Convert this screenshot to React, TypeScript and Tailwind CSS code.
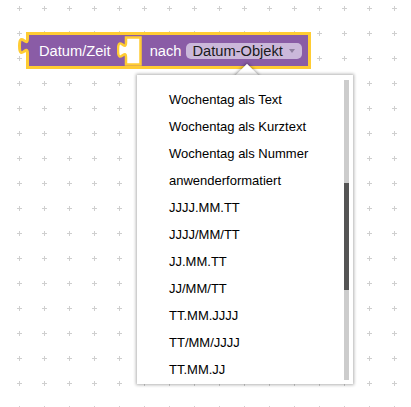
import React from "react";

const options = [
  "Wochentag als Text",
  "Wochentag als Kurztext",
  "Wochentag als Nummer",
  "anwenderformatiert",
  "JJJJ.MM.TT",
  "JJJJ/MM/TT",
  "JJ.MM.TT",
  "JJ/MM/TT",
  "TT.MM.JJJJ",
  "TT/MM/JJJJ",
  "TT.MM.JJ",
];

const GridBackground: React.FC = () => (
  <svg className="absolute inset-0 h-full w-full" aria-hidden="true">
    <defs>
      <pattern id="grid" width="25" height="25" patternUnits="userSpaceOnUse">
        <rect x="17" y="8" width="5" height="1" fill="#cfcfcf" />
        <rect x="19" y="6" width="1" height="5" fill="#cfcfcf" />
      </pattern>
    </defs>
    <rect width="100%" height="100%" fill="url(#grid)" />
  </svg>
);

const DateBlock: React.FC = () => (
  <div className="absolute left-[18px] top-[32px] h-[37px] w-[293px]">
    <svg className="absolute inset-0" width="293" height="37" aria-hidden="true">
      <path
        d="M9.5 1.5 v5 c0,10 -8,-8 -8,7.5 s8,-2.5 8,7.5 V35.5 H291.5 V1.5 Z"
        fill="#8a5ca6"
        stroke="#fc3"
        strokeWidth="3"
      />
    </svg>
    <div className="relative flex h-full items-center pl-[21px] text-[14.67px] text-white">
      <span>Datum/Zeit</span>
      <svg className="ml-[6px]" width="25" height="30" aria-hidden="true">
        <path
          d="M9 1.5 v5 c0,10 -8,-8 -8,7.5 s8,-2.5 8,7.5 V28.5 H23.5 V1.5 Z"
          fill="#fff"
          stroke="#fc3"
          strokeWidth="2.5"
        />
      </svg>
      <span className="ml-[8px]">nach</span>
      <div className="ml-[5px] flex h-[16px] w-[116px] items-center rounded-[5px] bg-[#cbb8da] pl-[6px] text-[#1a1a1a]">
        <span>Datum-Objekt</span>
        <svg className="ml-auto mr-[7px]" width="6" height="4" aria-hidden="true">
          <path d="M0 0 H6 L3 4 Z" fill="#8f7f9f" />
        </svg>
      </div>
    </div>
  </div>
);

const DropdownMenu: React.FC = () => (
  <div className="absolute left-[137px] top-[75px] h-[309px] w-[216px]">
    <div className="absolute left-[102px] top-[-8px] h-[16px] w-[16px] rotate-45 bg-white shadow-[0_0_3px_1px_rgba(0,0,0,0.3)]" />
    <div className="relative h-full w-full overflow-hidden bg-white shadow-[0_0_3px_1px_rgba(0,0,0,0.3)]">
      <div className="pt-[11px] text-[13px] text-black">
        {options.map((o) => (
          <div key={o} className="flex h-[27px] items-center pl-[32px]">
            {o}
          </div>
        ))}
      </div>
      <div className="absolute left-[207px] top-[5px] h-[300px] w-[5px] bg-[#cccccc]">
        <div className="mt-[103px] h-[107px] w-full bg-[#555555]" />
      </div>
    </div>
  </div>
);

export default function App() {
  return (
    <div
      className="relative h-[407px] w-[411px] overflow-hidden bg-white"
      style={{ fontFamily: '"Liberation Sans", Arial, sans-serif' }}
    >
      <GridBackground />
      <DateBlock />
      <DropdownMenu />
    </div>
  );
}
